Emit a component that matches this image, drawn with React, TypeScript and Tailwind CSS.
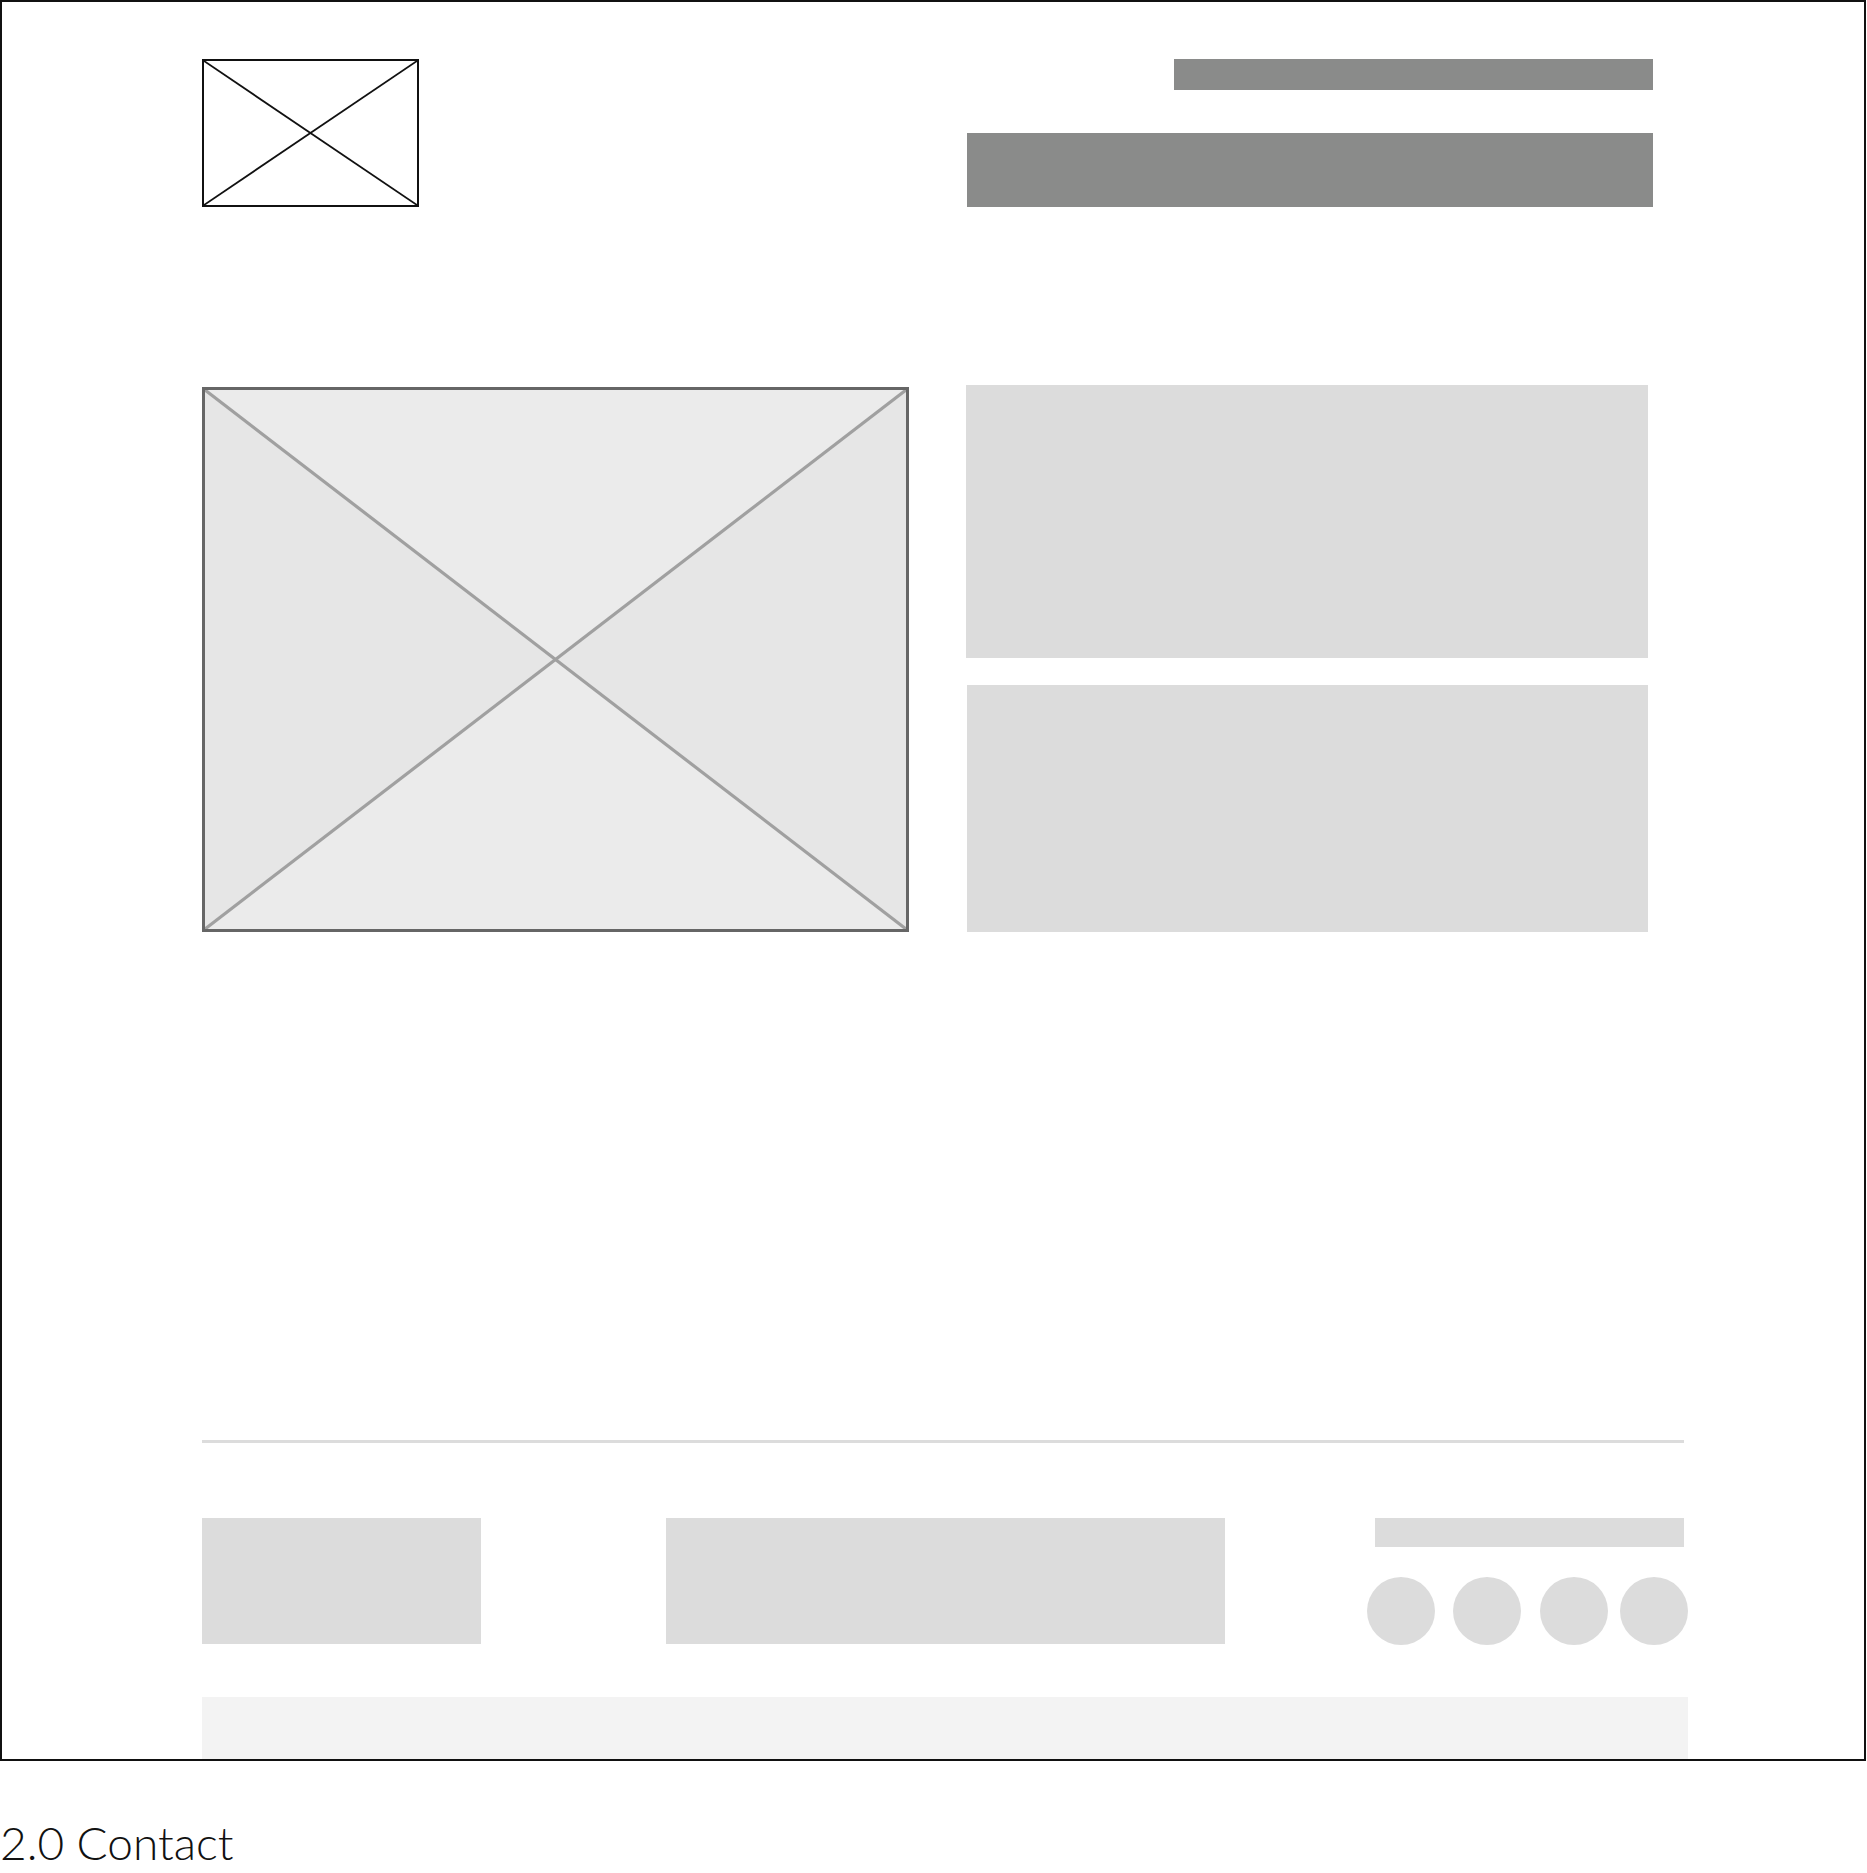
import React from 'react';

const Placeholder = ({ diag, width, shade = false }: { diag: string; width: number; shade?: boolean }) => (
  <svg className="block w-full h-full" viewBox="0 0 100 100" preserveAspectRatio="none">
    {shade && (
      <>
        <polygon points="0,0 100,0 50,50" fill="#ebebeb" />
        <polygon points="0,100 100,100 50,50" fill="#ebebeb" />
        <polygon points="0,0 0,100 50,50" fill="#e6e6e6" />
        <polygon points="100,0 100,100 50,50" fill="#e6e6e6" />
      </>
    )}
    <line x1="0" y1="0" x2="100" y2="100" stroke={diag} strokeWidth={width} vectorEffect="non-scaling-stroke" />
    <line x1="100" y1="0" x2="0" y2="100" stroke={diag} strokeWidth={width} vectorEffect="non-scaling-stroke" />
  </svg>
);

const Circle = ({ className = '' }: { className?: string }) => (
  <div className={`w-[68px] h-[68px] rounded-full bg-[#dcdcdc] shrink-0 ${className}`} />
);

export default function App() {
  return (
    <div className="bg-white w-[1867px] h-[1873px]" style={{ fontFamily: 'Lato, "Open Sans", sans-serif' }}>
      <div className="w-[1866px] h-[1761px] border-2 border-[#111] pl-[200px] pt-[57px] flex flex-col">
        {/* header */}
        <div className="flex w-[1451px] justify-between items-start">
          <div className="w-[217px] h-[148px] border-2 border-[#111]">
            <Placeholder diag="#111" width={1.8} />
          </div>
          <div className="flex flex-col items-end">
            <div className="w-[479px] h-[31px] bg-[#8a8b8a]" />
            <div className="mt-[43px] w-[686px] h-[74px] bg-[#8a8b8a]" />
          </div>
        </div>

        {/* main */}
        <div className="flex items-start mt-[178px]">
          <div className="mt-[2px] w-[707px] h-[545px] border-[3px] border-[#666] bg-[#e9e9e9]">
            <Placeholder diag="#a0a0a0" width={3.2} shade />
          </div>
          <div className="ml-[57px] w-[682px] flex flex-col">
            <div className="h-[273px] bg-[#dcdcdc]" />
            <div className="mt-[27px] ml-[1px] h-[247px] bg-[#dcdcdc]" />
          </div>
        </div>

        <div className="mt-[508px] w-[1482px] h-[3px] bg-[#dcdcdc]" />

        {/* footer */}
        <div className="flex items-start mt-[75px]">
          <div className="w-[279px] h-[126px] bg-[#dcdcdc]" />
          <div className="ml-[185px] w-[559px] h-[126px] bg-[#dcdcdc]" />
          <div className="ml-[142px] flex flex-col">
            <div className="ml-[8px] w-[309px] h-[29px] bg-[#dcdcdc]" />
            <div className="mt-[30px] flex">
              <Circle />
              <Circle className="ml-[18px]" />
              <Circle className="ml-[19px]" />
              <Circle className="ml-[12px]" />
            </div>
          </div>
        </div>

        <div className="mt-[52px] w-[1486px] flex-1 bg-[#f3f3f3]" />
      </div>

      <div className="mt-[59px] text-[46px] leading-none font-light text-[#111]">2.0 Contact</div>
    </div>
  );
}
